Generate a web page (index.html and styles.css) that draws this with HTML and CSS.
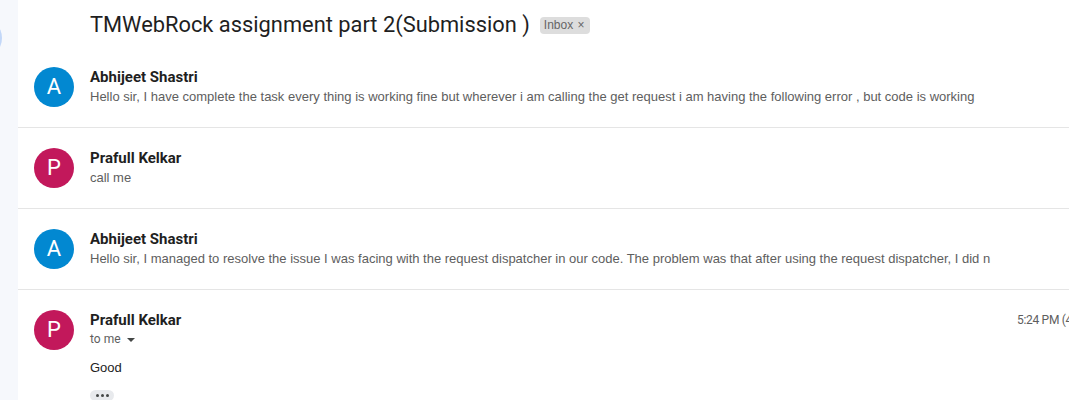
FILE: index.html
```html
<!DOCTYPE html>
<html>
<head>
<meta charset="utf-8">
<link rel="stylesheet" href="styles.css">
</head>
<body>
<div class="sidebar"><div class="side-dot"></div></div>
<div class="main">
  <div class="subject-row">
    <h1 class="subject">TMWebRock assignment part 2(Submission )</h1>
    <span class="chip">Inbox <span class="chip-x">×</span></span>
  </div>

  <div class="msg">
    <div class="avatar blue">A</div>
    <div class="msg-body">
      <div class="name">Abhijeet Shastri</div>
      <div class="snippet">Hello sir, I have complete the task every thing is working fine but wherever i am calling the get request i am having the following error , but code is working</div>
    </div>
  </div>

  <div class="msg">
    <div class="avatar pink">P</div>
    <div class="msg-body">
      <div class="name">Prafull Kelkar</div>
      <div class="snippet">call me</div>
    </div>
  </div>

  <div class="msg">
    <div class="avatar blue">A</div>
    <div class="msg-body">
      <div class="name">Abhijeet Shastri</div>
      <div class="snippet">Hello sir, I managed to resolve the issue I was facing with the request dispatcher in our code. The problem was that after using the request dispatcher, I did n</div>
    </div>
  </div>

  <div class="msg open">
    <div class="avatar pink">P</div>
    <div class="msg-body">
      <div class="head">
        <div class="name">Prafull Kelkar</div>
        <div class="time">5:24 PM (4 hours ago)</div>
      </div>
      <div class="to">to me <span class="caret"></span></div>
      <div class="content">Good</div>
      <div class="dots"><span></span><span></span><span></span></div>
    </div>
  </div>
</div>
</body>
</html>
```

FILE: styles.css
```css
html, body {
  margin: 0;
  padding: 0;
  height: 100%;
  overflow: hidden;
  background: #ffffff;
}
body {
  display: flex;
  font-family: Roboto, "Liberation Sans", Arial, sans-serif;
  color: #1f1f1f;
}
.sidebar {
  width: 18px;
  flex-shrink: 0;
  background: #f6f8fc;
  height: 100vh;
  overflow: hidden;
}
.side-dot {
  width: 40px;
  height: 40px;
  border-radius: 50%;
  background: #c2d7f8;
  margin-left: -38px;
  margin-top: 18px;
}
.main {
  flex: 1;
  min-width: 0;
}
.subject-row {
  display: flex;
  align-items: center;
  padding: 11px 0 8px 72px;
  height: 28px;
}
.subject {
  margin: 0;
  font-family: Roboto, "Open Sans", sans-serif;
  font-weight: 400;
  font-size: 21.85px;
  line-height: 28px;
  color: #1f1f1f;
}
.chip {
  margin-left: 10px;
  background: #dddddd;
  color: #666666;
  font-family: "Liberation Sans", Arial, sans-serif;
  font-size: 12px;
  line-height: 17px;
  padding: 0 5px 0 4px;
  border-radius: 4px;
}
.chip-x {
  font-size: 12px;
  margin-left: 1px;
}
.msg {
  display: flex;
  padding: 20px 0 20px 16px;
  border-bottom: 1px solid #e5e5e5;
}
.msg.open {
  border-bottom: none;
}
.avatar {
  width: 40px;
  height: 40px;
  border-radius: 50%;
  color: #ffffff;
  font-family: Roboto, sans-serif;
  font-size: 22px;
  line-height: 40px;
  text-align: center;
  flex-shrink: 0;
  margin-right: 16px;
}
.avatar.blue { background: #0288d1; }
.avatar.pink { background: #c2185b; }
.msg-body {
  flex: 1;
  min-width: 0;
}
.name {
  font-family: Roboto, sans-serif;
  font-weight: 700;
  font-size: 15px;
  line-height: 20px;
  color: #1f1f1f;
}
.snippet {
  font-family: "Liberation Sans", Arial, sans-serif;
  font-size: 13px;
  line-height: 20px;
  color: #5e5e5e;
  white-space: nowrap;
  overflow: hidden;
  max-width: 902px;
}
.head {
  display: flex;
  align-items: center;
}
.head .name {
  flex: 0 0 927px;
}
.time {
  flex: 1;
  min-width: 0;
  overflow: hidden;
  font-size: 12px;
  color: #5e5e5e;
  letter-spacing: -0.3px;
  white-space: nowrap;
}
.to {
  font-size: 12px;
  line-height: 18px;
  color: #5e5e5e;
  display: flex;
  align-items: center;
}
.caret {
  display: inline-block;
  width: 0;
  height: 0;
  border-left: 4px solid transparent;
  border-right: 4px solid transparent;
  border-top: 4px solid #444746;
  margin-left: 6px;
  margin-top: 2px;
}
.content {
  margin-top: 11px;
  font-family: "Liberation Sans", Arial, sans-serif;
  font-size: 13px;
  line-height: 18px;
  color: #222222;
}
.dots {
  margin-top: 13px;
  width: 24px;
  height: 11px;
  background: #e8eaed;
  border-radius: 6px;
  display: flex;
  align-items: center;
  justify-content: center;
  gap: 2px;
}
.dots span {
  width: 3px;
  height: 3px;
  border-radius: 50%;
  background: #444746;
}
```
